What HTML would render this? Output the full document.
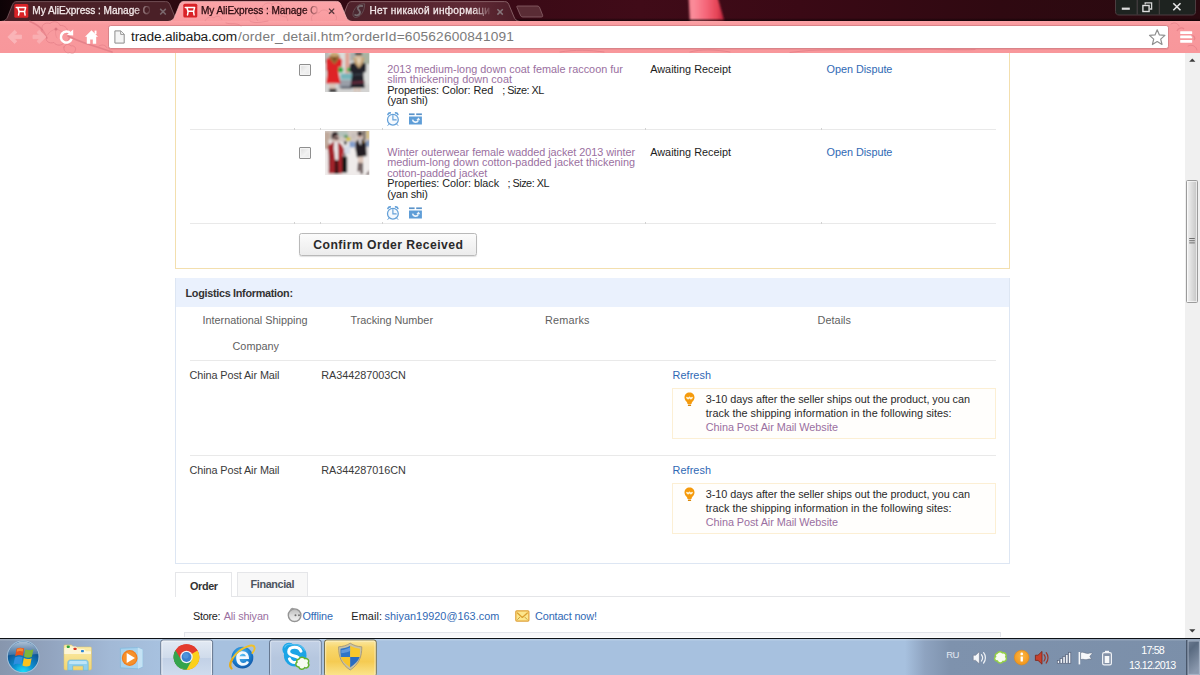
<!DOCTYPE html>
<html lang="en"><head><meta charset="utf-8"><title>My AliExpress : Manage Orders</title>
<style>
*{margin:0;padding:0;box-sizing:border-box}
html,body{width:1200px;height:675px;overflow:hidden;background:#fff}
body{position:relative;font-family:"Liberation Sans",Arial,sans-serif;font-size:10.7px;color:#222}
.t{position:absolute;white-space:nowrap}
.a{position:absolute}
svg{position:absolute;overflow:visible}
#page{position:absolute;left:0;top:0;width:1200px;height:675px;background:#fff}
.hl{position:absolute;height:1px;background:#e9e9e9}
.tick{position:absolute;width:1px;height:2px;background:#d2d2d2}
.cb{position:absolute;width:12px;height:12px;border:1px solid #8f8f8f;border-radius:1px;background:linear-gradient(135deg,#d9d9d9,#f2f2f2 55%,#e6e6e6);box-shadow:inset 0 0 0 1.2px #f4f4f4}
.tip{position:absolute;left:672px;width:324px;height:50.5px;border:1px solid #fcefd4;background:#fffefc}
.fade1,.fade2{-webkit-text-stroke:.28px currentColor}
.fade1{-webkit-mask-image:linear-gradient(90deg,#000 86%,rgba(0,0,0,.12) 100%);mask-image:linear-gradient(90deg,#000 86%,rgba(0,0,0,.12) 100%)}
.fade2{-webkit-mask-image:linear-gradient(90deg,#000 88%,rgba(0,0,0,.1) 100%);mask-image:linear-gradient(90deg,#000 88%,rgba(0,0,0,.1) 100%)}
#tabbar{position:absolute;left:0;top:0;width:1200px;height:21px;background:linear-gradient(90deg,#0d0306 0,#1b060b 30px,#2c0910 170px,#3b0a16 520px,#400b18 640px,#3a0915 800px,#2f0911 1000px,#2a0a10 1200px);overflow:hidden}
#toolbar{position:absolute;left:0;top:20.5px;width:1200px;height:32px;background:linear-gradient(180deg,#fba4a8 0,#f8999d 4px,#f8979b 100%)}
#omni{position:absolute;left:107.6px;top:4.4px;width:1061px;height:24.2px;background:#fff;border:1px solid #d98489;border-radius:2.8px;box-shadow:0 .6px 0 rgba(214,120,125,.5)}
#taskbar{position:absolute;left:0;top:638.3px;width:1200px;height:37px;background:linear-gradient(90deg,#8796ad 0,#92a4bf 50px,#a2b9d6 110px,#a7c1df 160px,#a7c1df 905px,#8ea3c0 925px,#7e92ad 950px,#7b8fa9 1200px);border-top:1.6px solid #0d1116;box-shadow:inset 0 1.4px 0 rgba(255,255,255,.2)}
.tb{position:absolute;top:1.5px;height:35.5px;border:1px solid rgba(255,255,255,.75);border-bottom:none;border-radius:2px 2px 0 0;box-shadow:0 0 0 1px rgba(60,80,110,.55)}
</style></head>
<body>
<div id="page">
  <!-- order items box -->
  <div class="a" style="left:175px;top:30px;width:834.5px;height:239px;border:1.3px solid #f3dfae"></div>
  <div class="cb" style="left:299px;top:63.7px"></div>
  <div class="cb" style="left:299px;top:146.8px"></div>
  <svg style="left:325px;top:52.8px" width="44.4" height="39" viewBox="0 0 44.4 39">
    <defs><filter id="b1" x="-5%" y="-5%" width="110%" height="110%"><feGaussianBlur stdDeviation="0.85"/></filter>
    <filter id="b1s" x="-5%" y="-5%" width="110%" height="110%"><feGaussianBlur stdDeviation="0.45"/></filter>
    <clipPath id="c1"><rect width="44.400" height="39"/></clipPath></defs>
    <g clip-path="url(#c1)"><g filter="url(#b1)">
      <rect x="-2" y="-2" width="49" height="44" fill="#dcdedc"/>
      <rect x="-2" y="-2" width="6" height="12" fill="#b9bcb8"/>
      <rect x="36.500" y="-1" width="9" height="12" fill="#a9b3a2"/>
      <rect x="25" y="-1" width="5" height="9" fill="#aab0ae"/>
      <rect x="-2" y="31" width="49" height="10" fill="#d3d3d2"/>
      <rect x="20.300" y="-1" width="4" height="21.500" fill="#e0a092"/>
      <rect x="15.500" y="20.500" width="11.500" height="6" fill="#74b4ba"/>
      <rect x="14" y="27" width="14" height="8.500" fill="#9a9fa8"/>
      <rect x="16" y="33" width="10" height="3" fill="#6f7680"/>
      <ellipse cx="15.600" cy="16.800" rx="2.800" ry="2.600" fill="#1fa83c"/>
      <ellipse cx="24.400" cy="16.600" rx="2.800" ry="2" fill="#46bb58"/>
      <!-- red coat -->
      <path d="M1.200 7 C2 5 4 4.500 6 4.500 L12 4.500 C14.500 4.500 16.600 5.500 17.200 7.500 L16.800 13.500 L13.600 14 L13.200 18 L15.600 30.600 L1 30.600 L2.600 18 L1.400 17.500 Z" fill="#de2027"/>
      <path d="M2 14 L3.600 18 L2.400 24 Z" fill="#b8141c"/>
      <path d="M4 2.400 L15 2.400 L13.400 7 L9.400 11.600 L5.400 7 Z" fill="#9a6a34"/>
      <path d="M7 3 L12 3 L9.500 9 Z" fill="#6e4520"/>
      <ellipse cx="9.500" cy="1.600" rx="4.200" ry="2.400" fill="#c9a46e"/>
      <rect x="4.800" y="30.600" width="2.200" height="6" fill="#dcc0ae"/><rect x="7.800" y="30.600" width="2.200" height="6" fill="#dcc0ae"/>
      <rect x="4.200" y="35.800" width="7.200" height="3.400" fill="#17171a"/>
      <!-- black coat -->
      <path d="M24.800 11.500 C26 10 28 9.600 30 9.600 L36.500 9.600 C38.800 9.600 40.600 10.400 41.200 12 L41 19 L38.600 19.400 L38.400 22 L39.800 35 L25.200 35 L27 22 L26.600 19.400 L24.600 19 Z" fill="#22222b"/>
      <path d="M28 4.400 L40 4.400 L38 10 L34 15.600 L29.600 10 Z" fill="#c6a576"/>
      <path d="M31.500 6 L36.500 6 L34 12.500 Z" fill="#e6d5b8"/>
      <ellipse cx="33.600" cy="3.400" rx="3" ry="2.600" fill="#d9bfa0"/>
      <rect x="30" y="-0.500" width="7" height="2.800" fill="#2a2226"/>
      <path d="M26.400 28.800 L39.400 27.800 L39.600 30 L26.200 31 Z" fill="#7a2c40" opacity=".8"/>
      <path d="M28 22 L37.600 21.200" stroke="#4a5560" stroke-width=".8"/>
      <rect x="29.200" y="35" width="2.200" height="4" fill="#dbbfae"/><rect x="33" y="35" width="2.200" height="4" fill="#dbbfae"/>
    </g></g>
  </svg>
  <svg style="left:325.2px;top:131px" width="44.400" height="44" viewBox="0 0 44.400 44">
    <defs><clipPath id="c2"><rect width="44.400" height="44"/></clipPath></defs>
    <g clip-path="url(#c2)"><g filter="url(#b1)">
      <rect x="-2" y="-2" width="49" height="49" fill="#efebea"/>
      <rect x="-2" y="-2" width="49" height="13" fill="#d3c9c3"/>
      <rect x="-1" y="1" width="6" height="17" fill="#c0aa9c"/>
      <rect x="13" y="0" width="10" height="6" fill="#b5c2bc"/>
      <rect x="21.400" y="6.400" width="4" height="3.400" fill="#d6c62f"/>
      <rect x="19" y="4" width="4" height="3" fill="#5d9a6a"/>
      <rect x="24.400" y="10.600" width="5.400" height="5.800" fill="#7f9ccc"/>
      <rect x="18.900" y="10.300" width="2.800" height="3.200" fill="#2c2d2a"/>
      <rect x="26" y="2" width="5" height="6" fill="#c9c0bb"/>
      <rect x="38.400" y="-1" width="2" height="10" fill="#5b4a3c"/>
      <rect x="42" y="-1" width="1.600" height="9" fill="#d6b83a"/>
      <rect x="41.200" y="9.600" width="3.400" height="6" fill="#7590b8"/>
      <rect x="19" y="15" width="6" height="8" fill="#d5dbe6"/>
      <!-- red long coat -->
      <path d="M2.600 17 C3 13.500 5 11.600 8 11 L13.400 11.400 C16 12.400 18 15 19.200 19.200 L18 26 L17.200 42.400 L3.800 42.400 L4.400 26 Z" fill="#a4232b"/>
      <path d="M3.600 20 L6 24 L5 40 L3.800 42 Z" fill="#861820"/>
      <path d="M13 13 L17.500 19 L16.500 27 L13.600 27 Z" fill="#b32a32"/>
      <path d="M9.200 10.800 L12.800 10.800 L13.200 29 L10.400 29 L9 18 Z" fill="#ebe8ea"/>
      <path d="M9.800 29 L13 29 L13.600 43 L9.600 43 Z" fill="#3c1418"/>
      <ellipse cx="11" cy="6.800" rx="3.200" ry="3.800" fill="#d3aea4"/>
      <path d="M6.400 4.600 C6.400 1.600 9 0.200 11.400 1 C12.800 1.500 13.400 3 13 4.400 L8.600 5.800 L7.600 9 C6.600 8 6.400 6 6.400 4.600 Z" fill="#2a1a20"/>
      <rect x="8.800" y="6.300" width="4.800" height="1.900" rx=".6" fill="#15131a"/>
      <path d="M4 8 C3 10 3.600 13 5.600 13.600 L7.600 10.800 Z" fill="#e9e4e4"/>
      <!-- suitcase -->
      <rect x="17" y="25.400" width="5.200" height="16.400" rx="1" fill="#141418"/>
      <rect x="19" y="22" width="1.200" height="4" fill="#2a2a30"/>
      <!-- black coat -->
      <path d="M30.400 12 C31 9.600 33 8.400 35 8.400 L38 8.800 C40 9.600 41 11.500 41.200 14 L41.800 25 L32 26.400 L30.400 18 Z" fill="#221a20"/>
      <path d="M34 8 L36.400 8.400 L36 14.500 L34.200 11.600 Z" fill="#e9e5e8"/>
      <circle cx="38.600" cy="10.800" r=".9" fill="#c9a23a"/>
      <ellipse cx="35" cy="4.600" rx="2.300" ry="2.900" fill="#cdaaa0"/>
      <path d="M32.600 1.400 C33.500 0 36.500 0 37.300 1.400 L37.500 3.600 L32.500 4 Z" fill="#241a1f"/>
      <rect x="33" y="3.700" width="4" height="1.400" rx=".5" fill="#17141a"/>
      <rect x="33.300" y="25.800" width="2" height="6.400" fill="#d8b9a8"/><rect x="36" y="25.800" width="2" height="6.400" fill="#d8b9a8"/>
      <path d="M33 31.800 L35.200 31.800 L35 40 L32.600 40.600 Z" fill="#3c1c1f"/><path d="M35.800 32 L38 32 L37.800 43 L35.600 43 Z" fill="#3a1a1d"/>
      <path d="M40.600 44 L44.400 39 L44.400 44 Z" fill="#6d5a5a"/>
    </g></g>
  </svg>
  <div class="hl" style="left:189.5px;top:129px;width:806.5px"></div>
  <div class="hl" style="left:189.5px;top:223px;width:806.5px"></div>
  <div class="tick" style="left:293.6px;top:128px"></div><div class="tick" style="left:320.1px;top:128px"></div><div class="tick" style="left:381.6px;top:128px"></div><div class="tick" style="left:645.2px;top:128px"></div><div class="tick" style="left:820.8px;top:128px"></div><div class="tick" style="left:293.6px;top:222px"></div><div class="tick" style="left:320.1px;top:222px"></div><div class="tick" style="left:381.6px;top:222px"></div><div class="tick" style="left:645.2px;top:222px"></div><div class="tick" style="left:820.8px;top:222px"></div>
  <svg style="left:386px;top:110.5px" width="38" height="16" viewBox="0 0 38 16" id="ri1">
    <g id="rowic" fill="none" stroke="#64a0d8" stroke-width="1.25" stroke-linecap="round">
      <circle cx="6.900" cy="8.700" r="5.400" fill="#f4f9fe"/>
      <path d="M6.9 4.6 V8.9 H10.2" stroke-width="1.15"/>
      <path d="M1.900 3.500 A2.400 2.400 0 0 1 4.300 1.900" stroke-width="1.600"/>
      <path d="M11.900 3.500 A2.400 2.400 0 0 0 9.500 1.900" stroke-width="1.600"/>
      <path d="M3.2 13 L1.9 14.4 M10.6 13 L11.9 14.4" stroke-width="1"/>
      <rect x="23" y="2.4" width="5.6" height="1.7" fill="#5b93c9" stroke="none"/>
      <rect x="30.2" y="2.4" width="5.7" height="1.7" fill="#5b93c9" stroke="none"/>
      <rect x="23" y="5.5" width="12.9" height="8" fill="#5e9dd7" stroke="none"/>
      <path d="M26.6 8.6 A3 3 0 0 0 32.3 9.4" stroke="#eaf3fb" stroke-width="1.6" stroke-linecap="butt"/>
      <path d="M30.4 8.9 L32.6 6.5 L34.3 9.3 Z" fill="#eaf3fb" stroke="none"/>
    </g>
  </svg>
  <svg style="left:386px;top:204.5px" width="38" height="16" viewBox="0 0 38 16"><use href="#rowic"/></svg>
  <div class="a" style="left:299.3px;top:232.5px;width:178.2px;height:23px;border:1px solid #b9b9b9;border-radius:2.5px;background:linear-gradient(180deg,#fbfbfb,#ececec);box-shadow:0 1px 1px rgba(0,0,0,.12)"></div>
  <!-- logistics -->
  <div class="a" style="left:175px;top:278px;width:834.5px;height:285.5px;border:1px solid #dde6f3"></div>
  <div class="a" style="left:175.6px;top:278.2px;width:833.3px;height:28.5px;background:#eaf1fd"></div>
  <div class="hl" style="left:189.5px;top:360px;width:806.5px"></div>
  <div class="hl" style="left:189.5px;top:455px;width:806.5px"></div>
  <div class="tip" style="top:388.3px"></div>
  <div class="tip" style="top:483.3px"></div>
  <svg style="left:683px;top:391.4px" width="14" height="17" viewBox="0 0 14 17">
    <g id="bulb">
      <path d="M6.500 1.500 C9.400 1.500 11.500 3.600 11.500 6.400 C11.500 8.400 10.400 9.600 9.400 10.800 C8.800 11.600 8.600 12.200 8.500 13 H4.500 C4.400 12.200 4.200 11.600 3.600 10.800 C2.600 9.600 1.500 8.400 1.500 6.400 C1.500 3.600 3.600 1.500 6.500 1.500 Z" fill="#f59a0c"/>
      <path d="M3.900 6.600 L5.100 7.800 L6.500 6.400 L7.900 7.800 L9.100 6.600" fill="none" stroke="#fff5d8" stroke-width="1.500" stroke-linejoin="round" stroke-linecap="round"/>
      <rect x="4.900" y="13.500" width="3.200" height="1.500" rx=".5" fill="#d9870a"/>
    </g>
  </svg>
  <svg style="left:683px;top:486.4px" width="14" height="17" viewBox="0 0 14 17"><use href="#bulb"/></svg>
  <!-- tabs -->
  <div class="a" style="left:175px;top:595.8px;width:834.5px;height:1px;background:#e4e5e8"></div>
  <div class="a" style="left:175.3px;top:572.3px;width:56.8px;height:25px;border:1px solid #e5e6e9;border-bottom:none;background:#fff"></div>
  <div class="a" style="left:237px;top:572.3px;width:71.4px;height:23.6px;border:1px solid #e5e6e9;border-bottom:none;background:#f8f8f8"></div>
  <svg style="left:286px;top:606px" width="18" height="18" viewBox="286 606 18 18">
    <defs><linearGradient id="offg" x1="0" x2="0" y1="0" y2="1"><stop offset="0" stop-color="#b9b9b9"/><stop offset=".5" stop-color="#dcdcdc"/><stop offset="1" stop-color="#f4f4f4"/></linearGradient></defs>
    <circle cx="294.600" cy="615.200" r="6.300" fill="url(#offg)" stroke="#949494" stroke-width="1.400"/>
    <path d="M290.800 610 C291 608.400 292.600 608.200 293.600 609" fill="none" stroke="#9c9c9c" stroke-width="1.500" stroke-linecap="round"/>
    <path d="M291 613.600 C293 611.600 297 611.400 299.400 613.400" fill="none" stroke="#cfcfcf" stroke-width=".8"/>
    <circle cx="295.500" cy="615.300" r="1" fill="#6e6e6e"/><circle cx="299" cy="615.300" r="1" fill="#777"/>
  </svg>
  <svg style="left:514px;top:609px" width="17" height="14" viewBox="514 609 17 14">
    <rect x="515.800" y="610.800" width="13.100" height="10.300" rx="1" fill="#fde68c" stroke="#e0a23a" stroke-width="1.200"/>
    <path d="M517.400 613 L522.350 617.400 L527.300 613" fill="none" stroke="#dca030" stroke-width="1.300" stroke-linecap="round" stroke-linejoin="round"/>
    <path d="M517.600 619.400 L519.600 617.400 M527.100 619.400 L525.100 617.400" stroke="#c8a040" stroke-width="1" stroke-linecap="round"/>
  </svg>
  <div class="a" style="left:184px;top:632.4px;width:817px;height:4.8px;border:1px solid #e2e4ea;border-bottom:none;background:#f7f7f9"></div>
  <div class="t"  style="left:387.2px;top:64.00px;font-size:10.85px;line-height:10.85px;color:#9a6fa0;letter-spacing:0.016px">2013 medium-long down coat female raccoon fur</div>
<div class="t"  style="left:387.2px;top:74.00px;font-size:10.85px;line-height:10.85px;color:#9a6fa0;letter-spacing:0.052px">slim thickening down coat</div>
<div class="t"  style="left:387.2px;top:85.00px;font-size:10.85px;line-height:10.85px;color:#1c1c1c;letter-spacing:-0.061px">Properties: Color: Red</div>
<div class="t"  style="left:502.2px;top:85.00px;font-size:10.85px;line-height:10.85px;color:#1c1c1c;letter-spacing:-0.480px">; Size: XL</div>
<div class="t"  style="left:387.2px;top:95.00px;font-size:10.85px;line-height:10.85px;color:#1c1c1c;letter-spacing:-0.099px">(yan shi)</div>
<div class="t"  style="left:650.2px;top:64.00px;font-size:10.85px;line-height:10.85px;color:#1c1c1c;letter-spacing:0.015px">Awaiting Receipt</div>
<div class="t"  style="left:826.6px;top:64.00px;font-size:10.85px;line-height:10.85px;color:#2f68b4;letter-spacing:-0.047px">Open Dispute</div>
<div class="t"  style="left:387.2px;top:147.00px;font-size:10.85px;line-height:10.85px;color:#9a6fa0;letter-spacing:-0.036px">Winter outerwear female wadded jacket 2013 winter</div>
<div class="t"  style="left:387.2px;top:157.00px;font-size:10.85px;line-height:10.85px;color:#9a6fa0;letter-spacing:0.014px">medium-long down cotton-padded jacket thickening</div>
<div class="t"  style="left:387.2px;top:168.00px;font-size:10.85px;line-height:10.85px;color:#9a6fa0;letter-spacing:-0.036px">cotton-padded jacket</div>
<div class="t"  style="left:387.2px;top:178.00px;font-size:10.85px;line-height:10.85px;color:#1c1c1c;letter-spacing:-0.031px">Properties: Color: black</div>
<div class="t"  style="left:507.4px;top:178.00px;font-size:10.85px;line-height:10.85px;color:#1c1c1c;letter-spacing:-0.480px">; Size: XL</div>
<div class="t"  style="left:387.2px;top:189.00px;font-size:10.85px;line-height:10.85px;color:#1c1c1c;letter-spacing:-0.099px">(yan shi)</div>
<div class="t"  style="left:650.2px;top:147.00px;font-size:10.85px;line-height:10.85px;color:#1c1c1c;letter-spacing:0.015px">Awaiting Receipt</div>
<div class="t"  style="left:826.6px;top:147.00px;font-size:10.85px;line-height:10.85px;color:#2f68b4;letter-spacing:-0.047px">Open Dispute</div>
<div class="t"  style="left:313.3px;top:239.00px;font-size:12.2px;line-height:12.2px;color:#2a2a2a;letter-spacing:0.452px;font-weight:bold">Confirm Order Received</div>
<div class="t"  style="left:185.5px;top:288.00px;font-size:10.85px;line-height:10.85px;color:#333;letter-spacing:-0.303px;font-weight:bold">Logistics Information:</div>
<div class="t"  style="left:202.5px;top:315.00px;font-size:10.85px;line-height:10.85px;color:#5f5f5f;letter-spacing:0.004px">International Shipping</div>
<div class="t"  style="left:232.5px;top:341.00px;font-size:10.85px;line-height:10.85px;color:#5f5f5f;letter-spacing:0.013px">Company</div>
<div class="t"  style="left:350.5px;top:315.00px;font-size:10.85px;line-height:10.85px;color:#5f5f5f;letter-spacing:-0.019px">Tracking Number</div>
<div class="t"  style="left:545.0px;top:315.00px;font-size:10.85px;line-height:10.85px;color:#5f5f5f;letter-spacing:0.185px">Remarks</div>
<div class="t"  style="left:817.5px;top:315.00px;font-size:10.85px;line-height:10.85px;color:#5f5f5f;letter-spacing:0.057px">Details</div>
<div class="t"  style="left:189.5px;top:370.00px;font-size:10.85px;line-height:10.85px;color:#3a3a3a;letter-spacing:-0.089px">China Post Air Mail</div>
<div class="t"  style="left:321.3px;top:370.00px;font-size:10.85px;line-height:10.85px;color:#3a3a3a;letter-spacing:-0.043px">RA344287003CN</div>
<div class="t"  style="left:672.6px;top:370.00px;font-size:10.85px;line-height:10.85px;color:#2f68b4;letter-spacing:0.069px">Refresh</div>
<div class="t"  style="left:705.8px;top:394.00px;font-size:10.85px;line-height:10.85px;color:#2a2a2a;letter-spacing:-0.051px">3-10 days after the seller ships out the product, you can</div>
<div class="t"  style="left:705.8px;top:408.00px;font-size:10.85px;line-height:10.85px;color:#2a2a2a;letter-spacing:0.020px">track the shipping information in the following sites:</div>
<div class="t"  style="left:705.8px;top:422.00px;font-size:10.85px;line-height:10.85px;color:#9a6fa0;letter-spacing:-0.054px">China Post Air Mail Website</div>
<div class="t"  style="left:189.5px;top:465.00px;font-size:10.85px;line-height:10.85px;color:#3a3a3a;letter-spacing:-0.089px">China Post Air Mail</div>
<div class="t"  style="left:321.3px;top:465.00px;font-size:10.85px;line-height:10.85px;color:#3a3a3a;letter-spacing:-0.043px">RA344287016CN</div>
<div class="t"  style="left:672.6px;top:465.00px;font-size:10.85px;line-height:10.85px;color:#2f68b4;letter-spacing:0.069px">Refresh</div>
<div class="t"  style="left:705.8px;top:489.00px;font-size:10.85px;line-height:10.85px;color:#2a2a2a;letter-spacing:-0.051px">3-10 days after the seller ships out the product, you can</div>
<div class="t"  style="left:705.8px;top:503.00px;font-size:10.85px;line-height:10.85px;color:#2a2a2a;letter-spacing:0.020px">track the shipping information in the following sites:</div>
<div class="t"  style="left:705.8px;top:517.00px;font-size:10.85px;line-height:10.85px;color:#9a6fa0;letter-spacing:-0.054px">China Post Air Mail Website</div>
<div class="t"  style="left:190.0px;top:581.00px;font-size:10.85px;line-height:10.85px;color:#333;letter-spacing:-0.383px;font-weight:bold">Order</div>
<div class="t"  style="left:250.5px;top:579.00px;font-size:10.85px;line-height:10.85px;color:#4d5560;letter-spacing:-0.377px;font-weight:bold">Financial</div>
<div class="t"  style="left:193.0px;top:611.00px;font-size:10.85px;line-height:10.85px;color:#1c1c1c;letter-spacing:-0.287px">Store:</div>
<div class="t"  style="left:223.8px;top:611.00px;font-size:10.85px;line-height:10.85px;color:#9a6fa0;letter-spacing:-0.158px">Ali shiyan</div>
<div class="t"  style="left:302.5px;top:611.00px;font-size:10.85px;line-height:10.85px;color:#2f68b4;letter-spacing:-0.109px">Offline</div>
<div class="t"  style="left:351.3px;top:611.00px;font-size:10.85px;line-height:10.85px;color:#1c1c1c;letter-spacing:0.112px">Email:</div>
<div class="t"  style="left:384.5px;top:611.00px;font-size:10.85px;line-height:10.85px;color:#2f68b4;letter-spacing:0.038px">shiyan19920@163.com</div>
<div class="t"  style="left:535.0px;top:611.00px;font-size:10.85px;line-height:10.85px;color:#2f68b4;letter-spacing:-0.118px">Contact now!</div>
  <!-- scrollbar -->
  <div class="a" style="left:1185.3px;top:52px;width:14.7px;height:587px;background:#f0f0f0"></div>
  <div class="a" style="left:1185.800px;top:180px;width:12.600px;height:122.500px;border:1px solid #9b9b9b;border-radius:1.500px;background:linear-gradient(90deg,#f2f2f2 0,#e4e4e4 30%,#d0d0d0 75%,#c6c6c6 100%);box-shadow:inset 0 0 0 1px rgba(255,255,255,.6)"></div>
  <svg style="left:1184px;top:52px" width="16" height="587" viewBox="1184 52 16 587">
    <path d="M1189.200 61.800 L1192.300 58.400 L1195.400 61.800 Z" fill="#3b3b3b"/>
    <path d="M1189.200 629.200 L1192.300 632.600 L1195.400 629.200 Z" fill="#3b3b3b"/>
    <path d="M1189.200 238.500 H1194.800 M1189.200 240.700 H1194.800 M1189.200 242.900 H1194.800" stroke="#6f6f6f" stroke-width="1"/>
  </svg>
</div>
<div id="tabbar">
  <svg style="left:0;top:0" width="1200" height="21" viewBox="0 0 1200 21">
    <defs>
      <filter id="bk" x="-30%" y="-30%" width="160%" height="160%"><feGaussianBlur stdDeviation="2.2"/></filter>
      <filter id="bk2" x="-30%" y="-30%" width="160%" height="160%"><feGaussianBlur stdDeviation="5"/></filter>
      <filter id="bk0" x="-20%" y="-20%" width="140%" height="140%"><feGaussianBlur stdDeviation=".9"/></filter>
      <linearGradient id="blob" x1="0" x2="1" y1="0" y2="0"><stop offset="0" stop-color="#f47f8e"/><stop offset=".12" stop-color="#fb8d9b"/><stop offset=".45" stop-color="#f6697c"/><stop offset=".78" stop-color="#e64558"/><stop offset=".93" stop-color="#c42840"/><stop offset="1" stop-color="#8a1a2c"/></linearGradient>
      <linearGradient id="tg3" x1="0" x2="1" y1="0" y2="0"><stop offset="0" stop-color="#4d2029"/><stop offset=".75" stop-color="#5f2a35"/><stop offset="1" stop-color="#4c1c27"/></linearGradient>
      <linearGradient id="tsh" x1="0" x2="0" y1="0" y2="1"><stop offset="0" stop-color="#0c0104" stop-opacity="0"/><stop offset="1" stop-color="#0c0104" stop-opacity=".85"/></linearGradient>
      <linearGradient id="tga" x1="0" x2="0" y1="0" y2="1"><stop offset="0" stop-color="#fba4a8"/><stop offset="1" stop-color="#f99b9f"/></linearGradient>
    </defs>
    <!-- bokeh background -->
    <path d="M688.600 -3 L717.500 -3 C720 6 722.500 14 725 24 L690 24 Z" fill="url(#blob)" filter="url(#bk0)"/>
    <rect x="0" y="18" width="1200" height="3.500" fill="url(#tsh)"/>
    <!-- inactive tab 1 -->
    <path d="M1 21.5 C5 21 6.6 19.4 7.6 17 L12.6 4.4 C13.6 2.2 14.8 1.6 17 1.6 L165.5 1.6 C167.6 1.6 168.8 2.2 169.8 4.4 L175 17 C176 19.4 177.5 21 181 21.5 Z" fill="#4a2027" stroke="#75555a" stroke-width=".9"/>
    <!-- inactive tab 3 -->
    <path d="M336 21.5 C340 21 341.6 19.4 342.6 17 L347.6 4.4 C348.6 2.2 349.8 1.6 352 1.6 L504.5 1.6 C506.6 1.6 507.8 2.2 508.8 4.4 L514 17 C515 19.4 516.5 21 520 21.5 Z" fill="url(#tg3)" stroke="#8b656b" stroke-width=".9"/>
    <!-- new tab button -->
    <path d="M517.5 6 L537 6 C538.5 6 539.3 6.6 539.8 8 L542.6 15.2 C543 16.4 542.6 17 541.4 17 L523 17 C521.6 17 520.8 16.4 520.3 15 L517 7.4 C516.6 6.4 516.8 6 517.5 6 Z" fill="#5a2c35" stroke="#8a636a" stroke-width=".8"/>
    <!-- active tab -->
    <path d="M168 21.500 C172 21 173.600 19.400 174.600 17 L179.600 4.400 C180.600 2.200 181.800 1.400 184 1.400 L336.600 1.400 C338.700 1.400 339.900 2.200 340.900 4.400 L346.100 17 C347.100 19.400 348.600 21 352.100 21.500 Z" fill="url(#tga)" stroke="#fcc0c1" stroke-width=".7"/>
    <g fill="none" stroke="#e58c92" stroke-width=".9" opacity=".8">
      <path d="M258 21 C254 16 256 10 262 9 C262 4 268 1.500 272 4 C276 1.500 282 3 282 8 C288 8 290 14 286 17 C288 19 288 21 287 21.500"/>
      <path d="M272 4 C271 8 272 11 274 13 M262 9 C266 10 270 12 274 13 M282 8 C279 10 276 12 274 13 M286 17 C282 16 277 15 274 13"/>
      <path d="M312 21 C310 16 314 12 319 13 C321 9 327 9 329 13 C334 12 338 16 336 20"/>
      <path d="M205 21 C207 17 211 16 214 18 C216 15 221 16 222 20"/>
    </g>
    <!-- favicons -->
    <defs><g id="fav">
      <rect x="0" y="0" width="14" height="13.800" rx="1.500" fill="#d92227"/>
      <path d="M2 3.600 H11.300 L10.400 7.400 H4.700 L3.500 3.600" fill="none" stroke="#fff" stroke-width="1.500" stroke-linejoin="round" stroke-linecap="round"/>
      <path d="M4.900 7.600 L4.200 11.100 M10.200 7.600 L10.800 11.100" stroke="#fff" stroke-width="1.500" stroke-linecap="round"/>
    </g></defs>
    <use href="#fav" x="14.3" y="4"/>
    <use href="#fav" x="183.3" y="3.8"/>
    <!-- tab 3 favicon -->
    <path d="M364.600 3.800 C359 3.400 354.600 7.400 353.200 12.400 C352.200 16.200 354 18.200 357.200 17.200 C361.600 15.800 365 9.600 364.600 3.800 Z" fill="#4a2730" stroke="#6b555b" stroke-width=".8"/>
    <path d="M362.200 6 C359.400 5.400 357.400 6.800 358 8.800 C358.600 10.600 360.800 11.200 359.800 13.400 C359 15.200 356.800 15.800 355.200 15" fill="none" stroke="#766a6e" stroke-width="1.900" stroke-linecap="round"/>
    <!-- close buttons -->
    <path d="M160.2 8.9 l5.6 5.6 m0 -5.6 l-5.6 5.6" stroke="#7a686d" stroke-width="1.500"/>
    <path d="M329 8.600 l5.200 5.200 m0 -5.200 l-5.200 5.200" stroke="#54343a" stroke-width="1.250"/>
    <path d="M497.4 9.2 l5.4 5.4 m0 -5.4 l-5.4 5.4" stroke="#86757a" stroke-width="1.500"/>
    <!-- window controls -->
    <path d="M1115.5 -1 H1195.5 V11.5 C1195.500 13.8 1194.3 15 1192 15 H1119 C1116.700 15 1115.500 13.8 1115.500 11.500 Z" fill="#1e2320" stroke="#4c3d40" stroke-width="1"/>
    <path d="M1137.200 0 V14.500 M1159.300 0 V14.500" stroke="#4d4547" stroke-width="1"/>
    <rect x="1121.800" y="7.600" width="8" height="2.200" fill="#dedede"/>
    <path d="M1145.200 4.500 V2.800 H1151.600 V9 H1150" fill="none" stroke="#d4d4d4" stroke-width="1.300"/>
    <rect x="1142.900" y="5.500" width="6.200" height="6" fill="none" stroke="#dedede" stroke-width="1.400"/>
    <path d="M1173.300 3.200 L1180.500 10.200 M1180.500 3.200 L1173.300 10.200" stroke="#e6e6e6" stroke-width="1.600"/>
  </svg>
  <div class="t fade1" style="left:32.3px;top:6.00px;font-size:10.1px;line-height:10.1px;color:#f3e9ea;letter-spacing:-0.032px;font-family:'Liberation Sans','DejaVu Sans',sans-serif">My AliExpress : Manage O</div>
<div class="t fade2" style="left:201.0px;top:6.00px;font-size:10.1px;line-height:10.1px;color:#2a0b10;letter-spacing:-0.084px;font-family:'Liberation Sans','DejaVu Sans',sans-serif">My AliExpress : Manage O</div>
<div class="t fade1" style="left:369.5px;top:6.00px;font-size:10.1px;line-height:10.1px;color:#f3e9ea;letter-spacing:0.287px;font-family:'Liberation Sans','DejaVu Sans',sans-serif">Нет никакой информаци</div>
</div>
<div id="toolbar"><div id="omni"></div></div>
<div class="a" id="tooltxt" style="left:0;top:0;width:1200px;height:53px">
  <svg style="left:0;top:21px" width="1200" height="32" viewBox="0 21 1200 32">
    <!-- faint blossom pattern -->
    <g fill="none" stroke="#dd7882" stroke-linecap="round" stroke-linejoin="round">
      <path d="M30 21.500 C35 23.500 39 26 42 29.500 C44 32 45.500 35 47 38" stroke-width="1.800" opacity=".75"/>
      <path d="M42 29.500 C41 25 45 22 50 23.500 C53 20.500 59 21.500 60 25.500 C65 25 69 29 67 33.500 C71 36.500 69 42 64 42.500 C62 46 56 46 54 42.500 C49 44 45 41 46.500 37 C42.500 36 41 32 42 29.500 Z" stroke-width="1" opacity=".6" fill="#f9a2a6" fill-opacity=".35"/>
      <path d="M56 29 C55 33 55.500 36 57 38 M56 29 C60 30 63 32 65 34 M56 29 C52 30 49 32 47.500 35" stroke-width=".8" opacity=".45"/>
      <path d="M68 36 C74 39 80 41.500 86 43.500 C94 46 102 48.500 112 52" stroke-width="1.800" opacity=".7"/>
      <path d="M64 47 C65 44 69 43.500 71 46 C74 45 77 48 75 51 C75 53 72 54 70 52.500 C67 54 63 51 64 47 Z" stroke-width="1" opacity=".55"/>
      <path d="M99 46 C102 44 106 45 107 48" stroke-width="1" opacity=".5"/>
      <path d="M226 23 C232 25 236 22 241 26 M250 21 C254 24 262 22 268 21" stroke-width="1" opacity=".5"/>
      <path d="M560 52 C575 49.500 590 50 604 52 M690 52 C700 49 716 49.500 730 52" stroke-width="1" opacity=".6"/>
      <path d="M790 52.500 C810 49 830 50 850 49.500 C880 49 900 50.500 925 49 C940 48.600 955 50.500 975 49.500" stroke-width="1.100" opacity=".6"/>
      <path d="M1171 24 C1174 22 1178 23 1179 26 M1188 46 C1192 44 1196 46 1197 50" stroke-width="1" opacity=".6"/>
    </g>
    <circle cx="56" cy="29" r="1.500" fill="#d06a75" opacity=".65"/>
    <!-- back / forward (disabled) -->
    <path d="M7.800 36.900 L14.600 30.300 L16.900 32.500 L14.200 35.100 H21.500 V38.700 H14.200 L16.900 41.300 L14.600 43.500 Z" fill="#fab4b7" stroke="#fab4b7" stroke-width=".8" stroke-linejoin="round"/>
    <path d="M46 36.900 L39.200 30.300 L36.900 32.500 L39.600 35.100 H33 V38.700 H39.600 L36.900 41.300 L39.200 43.500 Z" fill="#f9aeb1" stroke="#f9aeb1" stroke-width=".8" stroke-linejoin="round"/>
    <!-- reload -->
    <path d="M70.500 33.400 A5.500 5.500 0 1 0 71.600 38.800" fill="none" stroke="#fff" stroke-width="2.500"/>
    <path d="M66.800 35 L73.200 35.600 L73.200 29.400 Z" fill="#fff"/>
    <!-- home -->
    <path d="M91.500 30.300 L98 36.800 H96.200 V43.800 H92.800 V39.400 H90.200 V43.800 H86.800 V36.800 H85 Z" fill="#fff"/>
    <rect x="94.600" y="30.600" width="1.900" height="3.600" fill="#fff"/>
    <!-- page icon -->
    <path d="M114.900 30.900 H120.900 L124.200 34.200 V43.100 H114.900 Z" fill="#f4f4f4" stroke="#8c8c8c" stroke-width="1"/>
    <path d="M120.700 31 V34.400 H124.100" fill="#fff" stroke="#8c8c8c" stroke-width=".9"/>
    <!-- star -->
    <path d="M1157.200 29.800 L1159.400 34.900 L1164.900 35.400 L1160.700 39.100 L1162 44.500 L1157.200 41.600 L1152.400 44.500 L1153.700 39.100 L1149.500 35.400 L1155 34.900 Z" fill="#fff" stroke="#8f8f8f" stroke-width="1.200" stroke-linejoin="round"/>
    <!-- menu -->
    <g fill="#fff"><rect x="1180.200" y="31.200" width="12" height="2.700" rx=".5"/><rect x="1180.200" y="35.600" width="12" height="2.700" rx=".5"/><rect x="1180.200" y="40" width="12" height="2.700" rx=".5"/></g>
    <path d="M1177 31 C1178 28 1182 27 1184 29 M1191 36 C1194 35 1196 38 1194 40" fill="none" stroke="#e37a83" stroke-width="1.200" opacity=".7"/>
  </svg>
  <div class="t"  style="left:131.0px;top:30.00px;font-size:13.7px;line-height:13.7px;color:#1b1b1b;letter-spacing:-0.163px;font-family:'Liberation Sans','DejaVu Sans',sans-serif">trade.alibaba.com</div>
<div class="t"  style="left:238.0px;top:30.00px;font-size:13.7px;line-height:13.7px;color:#7b7b7b;letter-spacing:0.198px;font-family:'Liberation Sans','DejaVu Sans',sans-serif">/order_detail.htm?orderId=60562600841091</div>
</div>
<div id="taskbar">
  <!--TASKBG-->
</div>
<div class="a" id="tasktxt" style="left:0;top:0;width:1200px;height:675px;pointer-events:none">
  <svg style="left:0;top:638px" width="1200" height="37" viewBox="0 638 1200 37">
    <defs>
      <radialGradient id="orbB" cx=".5" cy="1" r=".75"><stop offset="0" stop-color="#17e4fd"/><stop offset=".45" stop-color="#0f8fd0"/><stop offset="1" stop-color="#0a4f8e"/></radialGradient>
      <linearGradient id="orbT" x1="0" x2="0" y1="0" y2="1"><stop offset="0" stop-color="#c7d6e6"/><stop offset=".5" stop-color="#7f9cba"/><stop offset="1" stop-color="#2f6da5"/></linearGradient>
      <clipPath id="orbC"><circle cx="23.2" cy="656.8" r="15.4"/></clipPath>
      <linearGradient id="btnG" x1="0" x2="0" y1="0" y2="1"><stop offset="0" stop-color="#e3eaf4"/><stop offset=".5" stop-color="#cfdbeb"/><stop offset=".5" stop-color="#c2d1e6"/><stop offset="1" stop-color="#cfdcee"/></linearGradient>
      <linearGradient id="btnS" x1="0" x2="0" y1="0" y2="1"><stop offset="0" stop-color="#c3d1e6"/><stop offset=".5" stop-color="#b6c7df"/><stop offset="1" stop-color="#b3c6e0"/></linearGradient>
      <linearGradient id="btnY" x1="0" x2="0" y1="0" y2="1"><stop offset="0" stop-color="#fbe8a4"/><stop offset=".2" stop-color="#f8d76e"/><stop offset=".6" stop-color="#f5cb52"/><stop offset="1" stop-color="#fbe58f"/></linearGradient>
      <radialGradient id="ieG" cx=".45" cy=".35" r=".7"><stop offset="0" stop-color="#5fc4f5"/><stop offset=".6" stop-color="#1b7fd0"/><stop offset="1" stop-color="#0e4f9e"/></radialGradient>
      <linearGradient id="fold" x1="0" x2="0" y1="0" y2="1"><stop offset="0" stop-color="#fbeeb0"/><stop offset="1" stop-color="#f3d56e"/></linearGradient>
      <linearGradient id="sdG" x1="0" x2=".35" y1="0" y2="1"><stop offset="0" stop-color="#6b7a90"/><stop offset=".3" stop-color="#596a80"/><stop offset="1" stop-color="#8a98ad"/></linearGradient>
      <radialGradient id="infG" cx=".5" cy=".4" r=".6"><stop offset="0" stop-color="#fbb848"/><stop offset="1" stop-color="#f2951a"/></radialGradient>
      <filter id="sb" x="-10%" y="-10%" width="120%" height="120%"><feGaussianBlur stdDeviation=".35"/></filter>
    </defs>
    <!-- task buttons -->
    <rect x="160.800" y="640" width="51.800" height="36" rx="2.200" fill="url(#btnG)" stroke="#5b6b82" stroke-width=".9"/>
    <rect x="161.900" y="641.100" width="49.600" height="35" rx="1.500" fill="none" stroke="#f4f7fb" stroke-width=".9" opacity=".85"/>
    <rect x="269.600" y="640" width="51.600" height="36" rx="2.200" fill="url(#btnS)" stroke="#56667e" stroke-width=".9"/>
    <rect x="270.700" y="641.100" width="49.400" height="35" rx="1.500" fill="none" stroke="#e6edf6" stroke-width=".9" opacity=".8"/>
    <rect x="324.600" y="640" width="51.600" height="36" rx="2.200" fill="url(#btnY)" stroke="#5f5a3c" stroke-width=".9"/>
    <rect x="325.700" y="641.100" width="49.400" height="35" rx="1.500" fill="none" stroke="#fff6d0" stroke-width=".9" opacity=".85"/>
    <g filter="url(#sb)">
    <!-- start orb -->
    <circle cx="23.200" cy="656.800" r="16.700" fill="#6f8fae" opacity=".55"/>
    <circle cx="23.200" cy="656.800" r="15.600" fill="url(#orbB)"/>
    <g clip-path="url(#orbC)"><path d="M5 640 H42 V655.500 C34 652 28 657 23 656 C17 655 12 653.500 5 656.500 Z" fill="url(#orbT)" opacity=".93"/></g>
    <circle cx="23.200" cy="656.800" r="15.900" fill="none" stroke="#a9c3dc" stroke-width="1.100" opacity=".9"/>
    <path d="M16.500 648.800 C19 647.300 21.500 647.300 24.200 648.600 L22.800 655.800 C20.400 654.600 17.800 654.800 15.200 656.200 Z" fill="#e8531d"/>
    <path d="M17.200 649 C19.200 648 21.400 648 23.200 648.900 L22.700 651.600 C20.700 650.800 18.700 650.900 16.700 651.800 Z" fill="#f59a3c" opacity=".8"/>
    <path d="M25.400 649.300 C28 650.700 30.600 650.700 33.400 649.300 L31.900 656.800 C29.300 658.200 26.700 658.100 24 656.600 Z" fill="#7db53a"/>
    <path d="M14.900 657.600 C17.500 656.200 20 656.200 22.600 657.300 L21.200 664.600 C18.700 663.400 16 663.500 13.400 664.900 Z" fill="#2f8fe0"/>
    <path d="M23.800 658 C26.500 659.400 29 659.400 31.600 658.200 L30.200 665.600 C27.600 666.800 25 666.800 22.400 665.400 Z" fill="#fbc21e"/>
    <!-- explorer -->
    <path d="M64 646.200 C64 645.300 64.500 644.900 65.300 644.900 H71.500 L73.500 647 H90 C91 647 91.500 647.500 91.500 648.400 V668.600 C91.500 669.500 91 670 90 670 H65.400 C64.500 670 64 669.500 64 668.600 Z" fill="url(#fold)" stroke="#e2c465" stroke-width=".5"/>
    <path d="M70.500 646.500 H76 L78 649 H84 L86 651.200 H91 V654 H64.300 V648 Z" fill="#fdf6d6"/>
    <rect x="66.800" y="645.600" width="2.900" height="2.300" rx=".6" fill="#2fa33a"/>
    <rect x="73.600" y="647.700" width="2.900" height="2.300" rx=".6" fill="#d83a26"/>
    <rect x="81" y="649.900" width="2.900" height="2.300" rx=".6" fill="#2b86d6"/>
    <path d="M67.800 670.300 V662.800 C67.800 661 68.800 660 70.600 660 H85.400 C87.200 660 88.200 661 88.200 662.800 V670.300 H83.300 V665.800 H72.700 V670.300 Z" fill="#8fd0ee" stroke="#64b2dc" stroke-width=".6"/>
    <path d="M69.200 662.600 C69.200 661.600 69.800 661.100 70.800 661.100 H85.200 C86.200 661.100 86.800 661.600 86.800 662.600 V664 H69.200 Z" fill="#c3e7f8" opacity=".9"/>
    <!-- media player -->
    <path d="M120.400 648.300 L137.800 647.600 L142.600 649.600 L142.600 666.800 L138 668.800 L120.400 667.800 Z" fill="#a8d3ee" stroke="#7eb7dd" stroke-width=".7"/>
    <path d="M137.800 647.600 L142.600 649.600 V666.800 L138 668.800 Z" fill="#c4e2f4"/>
    <circle cx="129.700" cy="658" r="7.900" fill="#f07d1c"/>
    <circle cx="129.700" cy="658" r="6.700" fill="#f89a33" opacity=".7"/>
    <path d="M126.700 653 L135 658 L126.700 663 Z" fill="#fff"/>
    <!-- chrome -->
    <circle cx="186.500" cy="657" r="12.800" fill="#e33b2e"/>
    <path d="M186.500 657 L175.414 650.600 A12.800 12.800 0 0 0 186.500 669.800 Z" fill="#34a24d"/>
    <path d="M186.500 657 L175.414 650.600 A12.800 12.800 0 0 0 180.100 668.086 Z" fill="#3cae53"/>
    <path d="M186.500 657 L199.300 657 A12.800 12.800 0 0 1 186.500 669.800 Z" fill="#fbd01f"/>
    <path d="M186.500 657 L197.585 650.600 A12.800 12.800 0 0 1 186.500 669.800 L180.100 668.086 Z" fill="#fbd01f"/>
    <path d="M186.500 650.800 H197.700 A12.800 12.800 0 0 0 175.414 650.600 L181.100 660 Z" fill="#e33b2e"/>
    <path d="M181.130 660.100 L175.414 650.600 A12.800 12.800 0 0 0 180.100 668.086 L186.500 669.800 L191.800 660.200 Z" fill="#36a44e"/>
    <circle cx="186.500" cy="657" r="6.200" fill="#f1f4f7"/>
    <circle cx="186.500" cy="657" r="4.900" fill="#3a7fcf"/>
    <circle cx="185.800" cy="655.800" r="2.800" fill="#5a9bdf" opacity=".7"/>
    <!-- IE -->
    <circle cx="242.400" cy="657.600" r="10.900" fill="url(#ieG)"/>
    <path d="M236.200 657.400 C236.400 653.400 239 651.200 242.600 651.200 C246.600 651.200 249.200 654 249 659 H239.600 C239.900 661.600 241.200 663 243.400 663 C245 663 246.200 662.200 246.800 661 L249 662 C248 664.600 245.800 665.800 243 665.800 C238.800 665.800 236 662.600 236.200 657.400 Z M239.700 656.300 H245.800 C245.600 654.600 244.500 653.700 242.800 653.700 C241.100 653.700 240 654.700 239.700 656.300 Z" fill="#f2f8fd" fill-rule="evenodd"/>
    <path d="M231.500 668.400 C227 664 235 651 247.600 646.300 C252 644.700 255 645.600 254.600 648.600 C254.300 650.400 253.200 652 252.400 653" fill="none" stroke="#f0c02c" stroke-width="1.900" stroke-linecap="round"/>
    <path d="M231.500 668.400 C229.600 666.400 230 662.800 232.400 659" fill="none" stroke="#e2a81e" stroke-width="2.100" stroke-linecap="round"/>
    <!-- skype -->
    <circle cx="289" cy="649.400" r="6.600" fill="#1ba5e7"/>
    <circle cx="295.200" cy="655.200" r="11.300" fill="#1aa4e6"/>
    <circle cx="301.200" cy="661.200" r="6.400" fill="#1ba5e7"/>
    <path d="M284.600 647.600 C285.600 644.600 289.600 643.400 292.400 645 C297.600 644 302.400 646.400 304.800 650.600" fill="none" stroke="#6fcdf5" stroke-width="1.100" opacity=".75"/>
    <path d="M301 651.200 C300 648.400 297.400 647.300 294.600 647.300 C291 647.300 288.700 649 288.700 651.800 C288.700 657.400 299.200 654.800 299.200 659.400 C299.200 661.400 297.400 662.600 295 662.600 C292 662.600 290.200 661 289.400 658.800" fill="none" stroke="#fff" stroke-width="3" stroke-linecap="round"/>
    <path d="M298.700 659.200 C299.600 656.800 303.600 656.400 304.800 658.600 C307.800 657.800 309.800 660.800 308.200 663 C310 665.600 307.600 668.800 304.800 667.600 C303.200 670 299.600 669.600 298.800 667 C295.800 667.200 294.800 663.400 297 662 C296.200 660.400 297.200 659.200 298.700 659.200 Z" fill="#f7fbf3" stroke="#63b22f" stroke-width="1.500"/>
    <!-- shield -->
    <path d="M350.200 643.200 C354 645.600 357.600 646.600 361.800 646.800 C362 656.600 358.800 664.400 350.200 670 C341.600 664.400 338.400 656.600 338.600 646.800 C342.800 646.600 346.400 645.600 350.200 643.200 Z" fill="#c9c2a4" stroke="#9a927a" stroke-width=".8"/>
    <path d="M350.200 645.800 V657 H340.800 C340.400 654.200 340.400 651.400 340.500 648.700 C344 648.400 347 647.600 350.200 645.800 Z" fill="#2f74c8"/>
    <path d="M350.200 645.800 C353.400 647.600 356.400 648.400 359.900 648.700 C360 651.400 360 654.200 359.600 657 H350.200 Z" fill="#f9c829"/>
    <path d="M340.800 657 H350.200 V667.400 C345 663.800 342 660.800 340.800 657 Z" fill="#f7c42c"/>
    <path d="M350.200 657 H359.600 C358.400 660.800 355.400 663.800 350.200 667.400 Z" fill="#2a6dc0"/>
    <path d="M341.400 650 C344.400 649.600 347.400 648.800 350.200 647.200 V651 C347 652.400 344 653 341.200 653.200 Z" fill="#7fb0ea" opacity=".6"/>
    </g>
    <!-- tray icons -->
    <g>
      <!-- white speaker -->
      <path d="M973.200 655.200 H975.600 L979.400 651.600 V664 L975.600 660.400 H973.200 Z" fill="#f4f6f9" stroke="#6b7688" stroke-width=".6"/>
      <path d="M981.400 654.600 C982.800 656.400 982.800 659.200 981.400 661 M983.600 652.600 C986 655.400 986 660.200 983.600 663" fill="none" stroke="#f0f3f7" stroke-width="1.200" stroke-linecap="round"/>
      <!-- green cloud icon -->
      <path d="M997 653.400 C998 651.400 1001.200 651 1002.400 652.800 C1005 652.200 1007 654.600 1005.700 656.800 C1007.600 659 1005.600 662.200 1003 661.400 C1001.600 663.600 998.200 663.400 997.400 661 C994.600 661.200 993.600 657.800 995.600 656.600 C994.800 655 995.600 653.600 997 653.400 Z" fill="#f7fbf1" stroke="#93d045" stroke-width="1.500"/>
      <!-- orange info -->
      <circle cx="1021.700" cy="657.600" r="7.400" fill="url(#infG)" stroke="#e08a14" stroke-width=".6"/>
      <rect x="1020.600" y="656.400" width="2.300" height="5.200" rx=".6" fill="#fff"/><circle cx="1021.750" cy="653.900" r="1.350" fill="#fff"/>
      <!-- red speaker -->
      <path d="M1035.400 655.200 H1038 L1042 651.400 V664.200 L1038 660.400 H1035.400 Z" fill="#c8402c" stroke="#7a2216" stroke-width=".8"/>
      <path d="M1044 654.600 C1045.400 656.400 1045.400 659.200 1044 661 M1046.200 652.600 C1048.600 655.400 1048.600 660.200 1046.200 663" fill="none" stroke="#9c3526" stroke-width="1.200" stroke-linecap="round"/>
      <!-- signal bars -->
      <g fill="#f1f4f8" stroke="#56627a" stroke-width=".7"><rect x="1057.300" y="660.400" width="2.300" height="2.900"/><rect x="1060.100" y="658.400" width="2.300" height="4.900"/><rect x="1062.900" y="656.400" width="2.300" height="6.900"/><rect x="1065.700" y="654.400" width="2.300" height="8.900"/><rect x="1068.500" y="652.300" width="2.300" height="11"/></g>
      <!-- flag -->
      <path d="M1079.400 652 V664.400" stroke="#f4f6f9" stroke-width="1.600"/>
      <path d="M1080.600 652.600 C1083.600 651.200 1085.600 654 1088.400 653.400 C1090 653 1091.400 652.800 1092.400 653.400 L1089.800 656.200 L1091.600 659.200 C1088.600 658.400 1087 660.200 1084.600 659.600 C1083 659.200 1081.800 659.200 1080.600 659.800 Z" fill="#f6f8fb" stroke="#5b677b" stroke-width=".5"/>
      <!-- battery -->
      <rect x="1102.600" y="652.600" width="8.800" height="12.200" rx="1.600" fill="#8492a8" stroke="#eef1f5" stroke-width="1.200"/>
      <rect x="1105" y="650.800" width="4" height="1.600" fill="#f4f6f9"/>
      <rect x="1104.700" y="656" width="4.600" height="7" fill="#f6f8fa"/>
      <!-- show desktop -->
      <rect x="1188" y="641" width="11.400" height="33.400" fill="url(#sdG)" stroke="#a9b6c8" stroke-width="1"/>
      <path d="M1186.800 640 V675" stroke="#2b3646" stroke-width=".9"/>
    </g>
  </svg>
  <div class="t"  style="left:946.3px;top:650.00px;font-size:9.5px;line-height:9.5px;color:#e3e9f1;letter-spacing:-0.734px;font-family:'Liberation Sans','DejaVu Sans',sans-serif">RU</div>
<div class="t"  style="left:1141.3px;top:645.00px;font-size:10.7px;line-height:10.7px;color:#fff;letter-spacing:-0.837px;font-family:'Liberation Sans','DejaVu Sans',sans-serif">17:58</div>
<div class="t"  style="left:1129.1px;top:660.00px;font-size:10.7px;line-height:10.7px;color:#fff;letter-spacing:-0.722px;font-family:'Liberation Sans','DejaVu Sans',sans-serif">13.12.2013</div>
</div>
</body></html>
